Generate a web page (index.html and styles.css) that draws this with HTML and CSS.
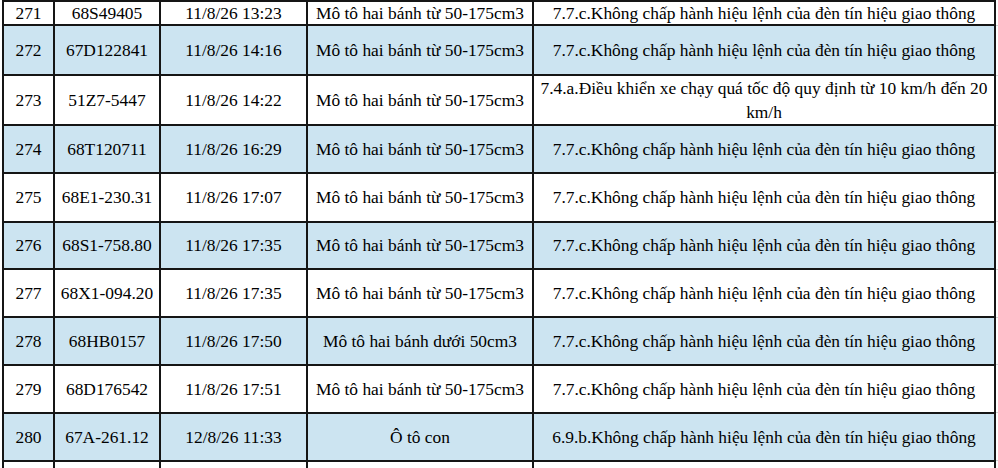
FILE: index.html
```html
<!DOCTYPE html>
<html lang="vi">
<head>
<meta charset="utf-8">
<link rel="stylesheet" href="styles.css">
</head>
<body>
<table class="grid">
  <colgroup>
    <col class="c-no"><col class="c-plate"><col class="c-time"><col class="c-type"><col class="c-viol"><col class="c-pad">
  </colgroup>
  <tbody>
    <tr class="r-first"><td>271</td><td>68S49405</td><td>11/8/26 13:23</td><td>Mô tô hai bánh từ 50-175cm3</td><td>7.7.c.Không chấp hành hiệu lệnh của đèn tín hiệu giao thông</td><td class="pad"></td></tr>
    <tr class="blue r50"><td>272</td><td>67D122841</td><td>11/8/26 14:16</td><td>Mô tô hai bánh từ 50-175cm3</td><td>7.7.c.Không chấp hành hiệu lệnh của đèn tín hiệu giao thông</td><td class="pad"></td></tr>
    <tr class="r48"><td>273</td><td>51Z7-5447</td><td>11/8/26 14:22</td><td>Mô tô hai bánh từ 50-175cm3</td><td class="wrap">7.4.a.Điều khiển xe chạy quá tốc độ quy định từ 10 km/h đến 20<br>km/h</td><td class="pad"></td></tr>
    <tr class="blue r48"><td>274</td><td>68T120711</td><td>11/8/26 16:29</td><td>Mô tô hai bánh từ 50-175cm3</td><td>7.7.c.Không chấp hành hiệu lệnh của đèn tín hiệu giao thông</td><td class="pad"></td></tr>
    <tr class="r49"><td>275</td><td>68E1-230.31</td><td>11/8/26 17:07</td><td>Mô tô hai bánh từ 50-175cm3</td><td>7.7.c.Không chấp hành hiệu lệnh của đèn tín hiệu giao thông</td><td class="pad"></td></tr>
    <tr class="blue r48"><td>276</td><td>68S1-758.80</td><td>11/8/26 17:35</td><td>Mô tô hai bánh từ 50-175cm3</td><td>7.7.c.Không chấp hành hiệu lệnh của đèn tín hiệu giao thông</td><td class="pad"></td></tr>
    <tr class="r48"><td>277</td><td>68X1-094.20</td><td>11/8/26 17:35</td><td>Mô tô hai bánh từ 50-175cm3</td><td>7.7.c.Không chấp hành hiệu lệnh của đèn tín hiệu giao thông</td><td class="pad"></td></tr>
    <tr class="blue r48"><td>278</td><td>68HB0157</td><td>11/8/26 17:50</td><td>Mô tô hai bánh dưới 50cm3</td><td>7.7.c.Không chấp hành hiệu lệnh của đèn tín hiệu giao thông</td><td class="pad"></td></tr>
    <tr class="r48"><td>279</td><td>68D176542</td><td>11/8/26 17:51</td><td>Mô tô hai bánh từ 50-175cm3</td><td>7.7.c.Không chấp hành hiệu lệnh của đèn tín hiệu giao thông</td><td class="pad"></td></tr>
    <tr class="blue r48"><td>280</td><td>67A-261.12</td><td>12/8/26 11:33</td><td>Ô tô con</td><td>6.9.b.Không chấp hành hiệu lệnh của đèn tín hiệu giao thông</td><td class="pad"></td></tr>
    <tr class="r48"><td></td><td></td><td></td><td></td><td></td><td class="pad"></td></tr>
  </tbody>
</table>
</body>
</html>
```
FILE: styles.css
```css
html, body {
  margin: 0;
  padding: 0;
  background: #ffffff;
  overflow: hidden;
  height: 468px;
}

.grid {
  margin: 0 0 0 2px;
  border-collapse: collapse;
  table-layout: fixed;
  width: 996px;
  font-family: "Liberation Serif", "Times New Roman", serif;
  font-size: 17.4px;
  color: #000;
}

.c-no { width: 51px; }
.c-plate { width: 106px; }
.c-time { width: 147px; }
.c-type { width: 226px; }
.c-viol { width: 462px; }
.c-pad { width: 4px; }

.grid td {
  border: 2px solid #151515;
  text-align: center;
  vertical-align: middle;
  padding: 0 2px;
  white-space: nowrap;
  overflow: hidden;
  line-height: 22px;
}

.grid td.wrap {
  white-space: normal;
  line-height: 24px;
}

.grid td.pad {
  border-top: none;
  border-right: none;
  border-bottom: 1px solid #d4d4d4;
  background: #fff;
  padding: 0;
}

.blue td {
  background: #cce4f1;
}

.r-first { height: 24px; }
.r50 { height: 50px; }
.r49 { height: 48.8px; }
.r48 { height: 47.8px; }
```
